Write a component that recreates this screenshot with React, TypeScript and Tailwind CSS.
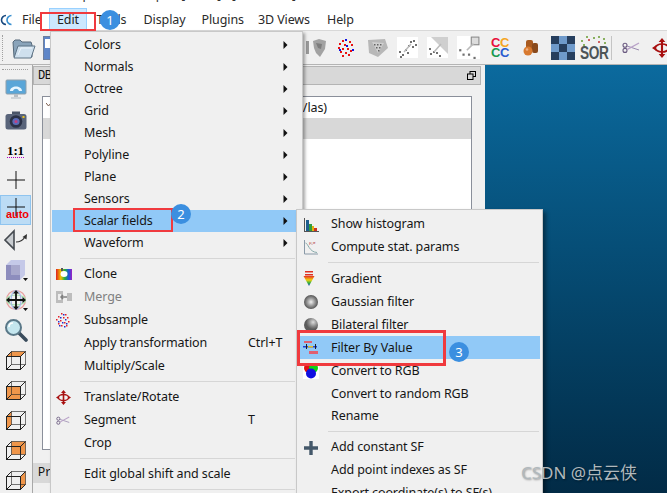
import React from "react";

const Arrow = () => (
  <svg width="5" height="8" viewBox="0 0 5 8" className="absolute right-[8px] top-1/2 -translate-y-1/2">
    <path d="M0.5 0 L4.5 4 L0.5 8 Z" fill="#111" />
  </svg>
);

const I = ({ w = 16, h = 16, children }: { w?: number; h?: number; children: React.ReactNode }) => (
  <svg width={w} height={h} viewBox={`0 0 ${w} ${h}`} className="block shrink-0">{children}</svg>
);

const Dots = ({ pts, c, s = 1.5 }: { pts: number[][]; c: string; s?: number }) => (
  <>{pts.map((p, i) => <rect key={i} x={p[0]} y={p[1]} width={s} height={s} fill={c} />)}</>
);

const CloneIcon = () => (
  <I w={17} h={14}>
    <defs>
      <linearGradient id="rb" x1="0" y1="0" x2="1" y2="0">
        <stop offset="0" stopColor="#e02020" /><stop offset=".3" stopColor="#f0c000" /><stop offset=".55" stopColor="#20b040" /><stop offset=".8" stopColor="#2050e0" /><stop offset="1" stopColor="#a020c0" />
      </linearGradient>
    </defs>
    <rect x="0" y="2" width="16" height="11" fill="url(#rb)" />
    <ellipse cx="8" cy="7" rx="3.5" ry="3" fill="#fff" />
    <rect x="5" y="1" width="2" height="3" fill="#555" />
  </I>
);
const MergeIcon = () => (
  <I w={17} h={14}>
    <rect x="0" y="1" width="7" height="12" fill="#bdbdbd" /><rect x="2" y="4" width="3" height="6" fill="#eee" />
    <rect x="11" y="3" width="5" height="8" fill="#bdbdbd" />
    <path d="M11 7 H5 M7 5 L5 7 L7 9" stroke="#808080" strokeWidth="1.5" fill="none" />
  </I>
);
const SubsampleIcon = () => (
  <I w={14} h={15}>
    <Dots c="#e5202a" pts={[[5, 0], [9, 1], [2, 3], [7, 4], [11, 4], [0, 6], [4, 7], [12, 8], [2, 10], [8, 9], [5, 12], [10, 12]]} />
    <Dots c="#2030d0" pts={[[7, 1], [4, 4], [9, 6], [2, 8], [6, 9], [10, 10], [8, 13], [3, 12]]} />
  </I>
);
const CrossRed = ({ s = 15 }: { s?: number }) => (
  <svg width={s} height={s} viewBox="0 0 15 15" className="block shrink-0">
    <g stroke="#a81010" fill="none" strokeWidth="1.3">
      <path d="M7.5 2 V13" strokeWidth="1.6" />
      <ellipse cx="7.5" cy="7.5" rx="5" ry="3" />
    </g>
    <path d="M7.5 0 L10 3 H5 Z M7.5 15 L10 12 H5 Z M0 7.5 L3 5.5 V9.5 Z M15 7.5 L12 5.5 V9.5 Z" fill="#a81010" />
  </svg>
);
const Scissors = ({ w = 14, h = 9 }: { w?: number; h?: number }) => (
  <svg width={w} height={h} viewBox="0 0 18 11" className="block shrink-0">
    <circle cx="3" cy="3.2" r="2" fill="none" stroke="#6a5a80" strokeWidth="1.1" />
    <circle cx="3" cy="8.4" r="2" fill="none" stroke="#6a5a80" strokeWidth="1.1" />
    <path d="M5 4 L17 8" stroke="#9a8ab0" strokeWidth="1" />
    <path d="M5 7.6 L17 1" stroke="#b9a2c8" strokeWidth="1.4" />
  </svg>
);
const HistIcon = () => (
  <I w={16} h={16}>
    <rect x="1" y="1" width="1" height="14" fill="#555" />
    <rect x="3" y="3" width="3" height="11" fill="#1f5f8f" />
    <rect x="6" y="7" width="3" height="7" fill="#2e9e3e" />
    <rect x="9" y="9" width="2" height="5" fill="#e0b010" />
    <rect x="11" y="11" width="3" height="3" fill="#d03020" />
    <rect x="1" y="14" width="15" height="1" fill="#555" />
  </I>
);
const StatIcon = () => (
  <I w={16} h={16}>
    <path d="M1.5 1 V15 H15" stroke="#8a9aa8" fill="none" />
    <path d="M2.5 4 C5 4 6 13 14 13.5" stroke="#8aa" fill="none" />
    <text x="6" y="5" fontSize="5" fill="#b03030" fontFamily="Liberation Serif, serif">μ,σ</text>
  </I>
);
const GradIcon = () => (
  <I w={12} h={16}>
    <rect x="2" y="0" width="8" height="1.5" fill="#e03020" />
    <rect x="2" y="3" width="8" height="1.5" fill="#e03020" />
    <defs><linearGradient id="gr" x1="0" y1="0" x2="0" y2="1"><stop offset="0" stopColor="#e83020" /><stop offset=".4" stopColor="#f0d010" /><stop offset=".7" stopColor="#30b040" /><stop offset="1" stopColor="#2040c0" /></linearGradient></defs>
    <path d="M0.5 5 H11.5 L6 15 Z" fill="url(#gr)" />
  </I>
);
const GaussIcon = () => (
  <I w={16} h={16}>
    <defs><radialGradient id="ga"><stop offset="0" stopColor="#f0f0f0" /><stop offset=".5" stopColor="#a0a0a0" /><stop offset="1" stopColor="#555" /></radialGradient></defs>
    <circle cx="8" cy="8" r="7" fill="url(#ga)" />
  </I>
);
const BilatIcon = () => (
  <I w={16} h={16}>
    <defs><radialGradient id="bi" cx=".65" cy=".3"><stop offset="0" stopColor="#dcdcdc" /><stop offset=".6" stopColor="#8a8a8a" /><stop offset="1" stopColor="#5a5a5a" /></radialGradient></defs>
    <circle cx="8" cy="8" r="7" fill="url(#bi)" />
  </I>
);
const FilterIcon = () => (
  <I w={16} h={16}>
    <rect x="1" y="1" width="8" height="2" fill="#e06070" />
    <rect x="0" y="6" width="14" height="1.5" fill="#2040d0" />
    <rect x="5" y="6" width="5" height="1.5" fill="#e8c020" />
    <rect x="3" y="4" width="1" height="5" fill="#222" />
    <rect x="12" y="4" width="1" height="5" fill="#222" />
    <rect x="6" y="11" width="9" height="3" fill="#e06070" />
  </I>
);
const RgbIcon = () => (
  <svg width="16" height="16" viewBox="0 0 16 16" className="block shrink-0">
    <rect width="16" height="16" fill="#fff" />
    <circle cx="5.5" cy="5" r="4.5" fill="#e01010" />
    <circle cx="10.5" cy="5" r="4.5" fill="#10d010" />
    <circle cx="8" cy="10.5" r="5" fill="#1010e0" />
  </svg>
);
const PlusIcon = () => (
  <I w={16} h={16}>
    <path d="M8 1 V15 M1 8 H15" stroke="#44586a" strokeWidth="3.4" />
  </I>
);

type Item = { t?: string; h?: number; sep?: boolean; icon?: React.ReactNode; arrow?: boolean; hi?: boolean; dis?: boolean; sc?: string; lo?: boolean };

const MenuRows = ({ items, left, iconLeft, sepLeft }: { items: Item[]; left: string; iconLeft: string; sepLeft: string }) => (
  <>
    {items.map((it, i) =>
      it.sep ? (
        <div key={i} style={{ height: it.h ?? 9 }} className={`flex items-center ${sepLeft} pr-[1px]`}>
          <div className="h-px w-full bg-[#d6d6d6]" />
        </div>
      ) : (
        <div
          key={i}
          style={{ height: it.h ?? 22 }}
          className={`relative flex items-center whitespace-nowrap ${left} ${it.lo ? "pt-[1px]" : ""} ${it.hi ? "bg-[#91c9f7]" : ""} ${it.dis ? "text-[#808080]" : "text-[#161616]"}`}
        >
          {it.icon && <div className={`absolute ${iconLeft} top-0 bottom-0 flex items-center`}>{it.icon}</div>}
          <span>{it.t}</span>
          {it.sc && <span className="absolute left-[196px] text-[#161616]">{it.sc}</span>}
          {it.arrow && <Arrow />}
        </div>
      )
    )}
  </>
);

const editItems: Item[] = [
  { t: "Colors", arrow: true }, { t: "Normals", arrow: true }, { t: "Octree", arrow: true }, { t: "Grid", arrow: true },
  { t: "Mesh", arrow: true }, { t: "Polyline", arrow: true }, { t: "Plane", arrow: true }, { t: "Sensors", arrow: true },
  { t: "Scalar fields", arrow: true, hi: true }, { t: "Waveform", arrow: true },
  { sep: true, h: 8 },
  { t: "Clone", h: 23, lo: true, icon: <CloneIcon /> }, { t: "Merge", h: 23, lo: true, dis: true, icon: <MergeIcon /> }, { t: "Subsample", h: 24, icon: <SubsampleIcon /> },
  { t: "Apply transformation", h: 23, sc: "Ctrl+T" }, { t: "Multiply/Scale" },
  { sep: true },
  { t: "Translate/Rotate", h: 23, icon: <CrossRed /> }, { t: "Segment", h: 23, sc: "T", icon: <Scissors /> }, { t: "Crop" },
  { sep: true },
  { t: "Edit global shift and scale" },
  { sep: true },
];

const sfItems: Item[] = [
  { t: "Show histogram", h: 23, icon: <HistIcon /> }, { t: "Compute stat. params", icon: <StatIcon /> },
  { sep: true },
  { t: "Gradient", h: 23, lo: true, icon: <GradIcon /> }, { t: "Gaussian filter", h: 23, lo: true, icon: <GaussIcon /> }, { t: "Bilateral filter", h: 23, lo: true, icon: <BilatIcon /> },
  { t: "Filter By Value", h: 23, lo: true, hi: true, icon: <FilterIcon /> }, { t: "Convert to RGB", h: 23, lo: true, icon: <RgbIcon /> },
  { t: "Convert to random RGB", h: 23, lo: true }, { t: "Rename" },
  { sep: true },
  { t: "Add constant SF", h: 23, icon: <PlusIcon /> }, { t: "Add point indexes as SF", h: 23 }, { t: "Export coordinate(s) to SF(s)", h: 23 },
];

const WireCube = ({ face }: { face: "top" | "front" | "left" | "back" | "right" }) => {
  const o = "#f0964a";
  return (
    <svg width="20" height="19" viewBox="0 0 20 19" className="block">
      {face === "top" && <path d="M0.5 5.5 L5.5 0.5 H19.5 L14.5 5.5 Z" fill={o} />}
      {face === "front" && <rect x="0.5" y="5.5" width="14" height="13" fill={o} />}
      {face === "left" && <path d="M0.5 5.5 L5.5 0.5 V13.5 L0.5 18.5 Z" fill={o} />}
      {face === "back" && <rect x="5.5" y="0.5" width="14" height="13" fill={o} />}
      {face === "right" && <path d="M14.5 5.5 L19.5 0.5 V13.5 L14.5 18.5 Z" fill={o} />}
      <g stroke="#222" fill="none" strokeWidth="1">
        <rect x="0.5" y="5.5" width="14" height="13" />
        <rect x="5.5" y="0.5" width="14" height="13" strokeOpacity=".6" />
        <path d="M0.5 5.5 L5.5 0.5 M14.5 5.5 L19.5 0.5 M0.5 18.5 L5.5 13.5 M14.5 18.5 L19.5 13.5" />
      </g>
    </svg>
  );
};

const DropTri = () => (
  <svg width="5" height="3" viewBox="0 0 5 3" className="absolute right-[3px] bottom-[4px]"><path d="M0 0 H5 L2.5 3 Z" fill="#111" /></svg>
);

const Cell = ({ children, hi }: { children: React.ReactNode; hi?: boolean }) => (
  <div className={`relative h-[30px] w-[31px] flex items-center justify-center ${hi ? "bg-[#bcdcf5] border border-[#8fc4ef]" : ""}`}>{children}</div>
);

const LeftBar = () => (
  <div className="w-[33px] shrink-0 border-r border-[#a8a8a8] bg-[#f0f0f0] relative pt-[10px]">
    <Cell>
      <svg width="22" height="22" viewBox="0 0 22 22" className="block">
        <rect x="1" y="1" width="20" height="14" rx="1" fill="#5aa6d8" stroke="#8fa0ac" />
        <path d="M5 12 C5 6 17 6 17 12 H14 C13 9 9 9 8 12 Z" fill="#e8f6ff" />
        <rect x="9" y="15" width="4" height="3" fill="#b8bec4" />
        <rect x="6" y="18" width="10" height="2" fill="#cfd4d8" />
      </svg>
    </Cell>
    <Cell>
      <svg width="22" height="19" viewBox="0 0 22 19" className="block">
        <rect x="7" y="0.5" width="8" height="4" fill="#4a5568" />
        <rect x="0.5" y="3" width="21" height="15.5" rx="2.5" fill="#59647a" />
        <circle cx="11" cy="10.5" r="6.3" fill="#2a3146" />
        <circle cx="11" cy="10.5" r="3.6" fill="#5b6bb8" />
        <circle cx="11" cy="10.5" r="1.5" fill="#c04080" />
        <rect x="17.5" y="5" width="2" height="2" fill="#e8c020" />
      </svg>
    </Cell>
    <Cell>
      <div className="relative font-['Liberation_Serif',serif] font-bold text-[13px] leading-none text-black">1:1
        <div className="absolute left-0 right-0 -bottom-[1px] border-b border-dotted border-[#b000c0]" />
      </div>
    </Cell>
    <Cell>
      <svg width="18" height="18" viewBox="0 0 18 18" className="block"><path d="M9 0 V18 M0 9 H18" stroke="#111" /></svg>
    </Cell>
    <Cell hi>
      <svg width="18" height="18" viewBox="0 0 18 18" className="absolute left-[6px] top-[2px]"><path d="M9 0 V18 M0 9 H18" stroke="#111" /></svg>
      <span className="absolute left-[5px] top-[12px] font-['Liberation_Sans',sans-serif] font-bold text-[11px] leading-[13px] text-[#f00000]">auto</span>
    </Cell>
    <Cell>
      <svg width="24" height="22" viewBox="0 0 24 22" className="block">
        <path d="M1 11 L10 2 V20 Z" fill="#c8ccd0" stroke="#454a50" strokeWidth="1.6" />
        <path d="M12 13 C16 13 19 11 21 8" stroke="#333" strokeWidth="1.2" fill="none" />
        <path d="M23 5 L22.5 10.5 L18.5 8 Z" fill="#333" />
      </svg>
    </Cell>
    <Cell>
      <svg width="22" height="22" viewBox="0 0 22 22" className="block">
        <path d="M1 6 L6 1 H20 V16 L15 21 H1 Z" fill="#c5c9e8" />
        <path d="M1 6 H15 V21 H1 Z" fill="#8d8dbd" />
        <path d="M6 6 H15 V16 H6 Z" fill="#a8a8cc" />
      </svg>
      <DropTri />
    </Cell>
    <Cell>
      <svg width="22" height="22" viewBox="0 0 22 22" className="block">
        <circle cx="11" cy="11" r="9.5" fill="none" stroke="#e8a0a0" strokeWidth="1.2" />
        <ellipse cx="11" cy="11" rx="9.5" ry="5" fill="none" stroke="#a0e0a8" strokeWidth="1.2" />
        <ellipse cx="11" cy="11" rx="5" ry="9.5" fill="none" stroke="#a8b8e8" strokeWidth="1.2" />
        <path d="M11 3 V19 M3 11 H19" stroke="#111" strokeWidth="1.8" />
        <path d="M11 1 L14 4.5 H8 Z M11 21 L14 17.5 H8 Z M1 11 L4.5 8 V14 Z M21 11 L17.5 8 V14 Z" fill="#111" />
      </svg>
      <DropTri />
    </Cell>
    <Cell>
      <svg width="24" height="24" viewBox="0 0 24 24" className="block">
        <path d="M15 15 L22 22" stroke="#3a4c5c" strokeWidth="3.6" strokeLinecap="round" />
        <circle cx="9.5" cy="9.5" r="7.5" fill="#c4e6ee" stroke="#5a7888" strokeWidth="2" />
        <path d="M5 9 C5 6 7 5 9 5" stroke="#fff" strokeWidth="1.5" fill="none" />
      </svg>
    </Cell>
    <Cell><WireCube face="top" /></Cell>
    <Cell><WireCube face="front" /></Cell>
    <Cell><WireCube face="left" /></Cell>
    <Cell><WireCube face="back" /></Cell>
    <Cell><WireCube face="right" /></Cell>
    <div className="absolute left-[2px] top-[4px] w-[26px] border-t border-dotted border-[#a0a0a0]" />
  </div>
);

const SpeckleSquare = ({ variant }: { variant: number }) => {
  const base = variant === 0
    ? [[2, 14], [5, 17], [3, 19], [8, 12], [10, 15], [13, 4], [16, 3], [18, 7], [15, 9], [11, 8]]
    : variant === 1
    ? [[2, 11], [6, 14], [3, 16], [9, 15], [12, 18]]
    : [[2, 12], [5, 16], [10, 16], [15, 19]];
  return (
    <svg width="21" height="21" viewBox="0 0 21 21" className="block">
      <rect width="21" height="21" fill="#fff" />
      {variant === 1 && <path d="M4 0 H21 V17 Z" fill="#cfcfcf" />}
      {variant === 2 && <rect x="13" y="1" width="7" height="7" fill="#ddd" stroke="#888" />}
      <Dots c="#707070" s={2} pts={base} />
      <path d={variant === 2 ? "M9 13 L15 7" : "M7 15 L14 7"} stroke="#bbb" strokeWidth="1.5" />
    </svg>
  );
};

const Checker = () => {
  const cells = [0, 1, 0, 1, 0, 1, 0, 1, 0];
  return (
    <div className="grid grid-cols-3 w-[24px] h-[24px]">
      {cells.map((c, i) => <div key={i} className={c ? "bg-[#6f9acb]" : "bg-[#263e5e]"} />)}
    </div>
  );
};

const Dots2 = () => (
  <svg width="26" height="10" viewBox="0 0 26 10" className="absolute left-0 top-0">
    <Dots c="#8ab060" s={2} pts={[[1, 4], [6, 0], [13, 1], [18, 0], [23, 2], [24, 6], [3, 8]]} />
    <Dots c="#d06060" s={2} pts={[[8, 3], [18, 5]]} />
  </svg>
);

const TopBar = () => (
  <div className="h-[35px] shrink-0 bg-[#f0f0f0] border-t border-[#d8d8d8] border-b border-b-[#b4b4b4] flex items-center relative">
    <div className="ml-[2px] h-[26px] border-l border-dotted border-[#a0a0a0]" />
    <div className="ml-[9px]">
      <svg width="24" height="22" viewBox="0 0 24 22" className="block">
        <path d="M2 20 L1 5 L3 3 H8 L10 5 H19 L20 8 V20 Z" fill="#8aa4ba" stroke="#56697a" />
        <path d="M2 21 L6 9 H23 L19 21 Z" fill="#cfe0ee" stroke="#5f7486" />
        <path d="M6 18 L9 11 H20" stroke="#eef5fb" fill="none" />
      </svg>
    </div>
    <div className="ml-[7px] w-[12px] h-[24px] bg-[#5f86c8] border border-[#6f7f9c] flex flex-col items-center pt-[2px]">
      <div className="w-[8px] h-[9px] bg-white" />
    </div>
    <div className="ml-auto flex items-center">
      <div className="w-[3px] h-[13px] bg-[#9a9a9a]" />
      <svg width="15" height="18" viewBox="0 0 15 18" className="block ml-[3px]">
        <path d="M1 2 L7 0 L14 2 L13 10 L8 18 L4 14 L2 9 Z" fill="#a2a2a2" />
        <path d="M4 4 L10 5 L9 10 L6 9 Z" fill="#7d7d7d" />
      </svg>
      <svg width="17" height="18" viewBox="0 0 17 18" className="block ml-[11px]">
        <Dots c="#e81010" s={2} pts={[[4, 1], [11, 2], [1, 4], [6, 5], [13, 5], [0, 8], [4, 9], [9, 9], [2, 12], [7, 13], [12, 11], [4, 16], [10, 15]]} />
        <Dots c="#1010e0" s={2} pts={[[7, 0], [14, 10], [8, 6], [1, 10]]} />
      </svg>
      <svg width="21" height="18" viewBox="0 0 21 18" className="block ml-[13px]">
        <path d="M0 1 L17 0 L20 9 L10 18 L1 14 Z" fill="#b8b8b8" />
        <path d="M4 3 L16 4 L10 14 Z" fill="#d0d0d0" />
        <Dots c="#666" pts={[[6, 5], [9, 5], [12, 5], [8, 8], [11, 8], [10, 11]]} />
      </svg>
      <div className="ml-[8px]"><SpeckleSquare variant={0} /></div>
      <div className="ml-[9px]"><SpeckleSquare variant={1} /></div>
      <div className="ml-[10px] scale-110"><SpeckleSquare variant={2} /></div>
      <div className="ml-[12px] w-[18px] grid grid-cols-2 font-['Liberation_Sans',sans-serif] font-bold text-[13px] leading-[10px] text-center">
        <span className="text-[#e8103a]">C</span><span className="text-[#f5a623]">C</span>
        <span className="text-[#1a9a50]">C</span><span className="text-[#2a5cd0]">C</span>
      </div>
      <svg width="16" height="17" viewBox="0 0 16 17" className="block ml-[14px]">
        <rect x="3" y="1" width="7" height="11" rx="2" fill="#a85a20" />
        <rect x="9" y="4" width="6" height="10" rx="2" fill="#8a4a1c" />
        <circle cx="5" cy="12" r="4.5" fill="#d87a30" />
        <circle cx="4" cy="10.5" r="1.3" fill="#f0b080" />
      </svg>
      <div className="ml-[12px]"><Checker /></div>
      <div className="ml-[5px] w-[26px] h-[24px] relative">
        <Dots2 />
        <span className="absolute left-0 -bottom-[1px] font-['Liberation_Sans',sans-serif] font-bold text-[19px] leading-[17px] tracking-[-0.5px] text-[#4d5457] scale-x-[0.72] origin-left">SOR</span>
      </div>
      <div className="ml-[5px] w-px h-[24px] bg-[#c4c4c4]" />
      <div className="ml-[10px]"><Scissors w={18} h={11} /></div>
      <div className="ml-[12px] mr-[-5px]"><CrossRed s={20} /></div>
    </div>
  </div>
);

const Dock = () => (
  <div className="w-[452px] shrink-0 bg-[#f0f0f0] font-['Liberation_Mono',monospace]">
    <div className="mt-[1px] w-[448px] h-[19px] bg-[#d8d8d8] border border-[#b4b4b4] flex items-center justify-between pl-[4px] pr-[4px] text-[12px] tracking-[-0.5px] text-[#111]">
      <span>DB Tree</span>
      <svg width="9" height="9" viewBox="0 0 9 9" className="block">
        <rect x="3" y="0.5" width="5.5" height="5" fill="none" stroke="#000" />
        <rect x="0.5" y="3" width="5.5" height="5.5" fill="#d8d8d8" stroke="#000" />
      </svg>
    </div>
    <div className="mt-[11px] ml-[9px] w-[430px] h-[354px] bg-white border border-[#8a8f9a] relative">
      <svg width="5" height="3" viewBox="0 0 5 3" className="absolute left-[3px] top-[6px]"><path d="M0 0 L2.5 3 L5 0" stroke="#7a5a4a" fill="none" /></svg>
      <div className="h-[21px] pt-[1px] flex justify-end items-center pr-[144px] font-['Noto_Sans',sans-serif] text-[12.5px] tracking-[-0.1px] text-[#161616]">/las)</div>
      <div className="h-[21px] bg-[#d8d8d8]" />
    </div>
    <div className="mt-[13px] w-[448px] h-[20px] flex items-center pl-[5px] text-[12px] tracking-[-0.5px] text-[#111] bg-[#d8d8d8]">Properties</div>
  </div>
);

const menuItems = [
  { t: "File", w: "ml-[8px]" }, { t: "Edit", w: "ml-[17px]" }, { t: "Tools", w: "ml-[16px]" }, { t: "Display", w: "ml-[17px]" },
  { t: "Plugins", w: "ml-[16px]" }, { t: "3D Views", w: "ml-[14px]" }, { t: "Help", w: "ml-[17px]" },
];

const Badge = ({ n, c }: { n: number; c: string }) => (
  <div className={`absolute ${c} w-[20px] h-[20px] rounded-full bg-[#3b8fe0] text-white flex items-center justify-center text-[13px] leading-none`}>{n}</div>
);

export default function App() {
  return (
    <div className="relative w-[667px] h-[493px] overflow-hidden bg-white flex flex-col font-['Noto_Sans',sans-serif] text-[12.5px] tracking-[-0.1px]">
      <div className="h-[9px] shrink-0 overflow-hidden relative">
        <div className="-mt-[14px] ml-[22px] whitespace-nowrap text-[12.5px] leading-[18px] text-[#333]">CloudCompare v2.12 alpha [64 bit] - [3D View 1]</div>
      </div>
      <div className="h-[21px] shrink-0 flex items-center bg-white text-[#2a2a2a]">
        <svg width="14" height="12" viewBox="0 0 14 12" className="block shrink-0">
          <path d="M6 1.5 A4.5 4.5 0 1 0 6 10.5" stroke="#1a4a80" strokeWidth="1.6" fill="none" />
          <path d="M11.5 1.5 A4.5 4.5 0 1 0 11.5 10.5" stroke="#3a90d0" strokeWidth="1.6" fill="none" />
        </svg>
        {menuItems.map((m) => (
          <span key={m.t} className={`${m.w} leading-[18px]`}>{m.t}</span>
        ))}
      </div>
      <TopBar />
      <div className="flex-1 flex min-h-0">
        <LeftBar />
        <Dock />
        <div className="flex-1 bg-gradient-to-b from-[#0b6a9e] to-[#022b46]" />
      </div>

      {/* Edit highlight in the menu bar */}
      <div className="absolute left-[49px] top-[8px] w-[38px] h-[23px] pt-[1px] bg-[#cce8ff] border border-[#99d1ff] flex items-center justify-center text-[#222]">Edit</div>

      {/* Edit menu */}
      <div className="absolute left-[50px] top-[31px] w-[253px] h-[470px] bg-[#f0f0f0] border border-[#c8c8c8] pt-[2px] pl-[1px] pr-[6px] shadow-[2px_2px_3px_rgba(0,0,0,0.35)]">
        <MenuRows items={editItems} left="pl-[32px]" iconLeft="left-[4px]" sepLeft="pl-[28px]" />
      </div>

      {/* Scalar fields submenu */}
      <div className="absolute left-[296px] top-[209px] w-[247px] h-[300px] bg-[#f0f0f0] border border-[#c8c8c8] pt-[3px] pl-[1px] pr-[2px] shadow-[3px_3px_4px_rgba(0,0,0,0.4)]">
        <MenuRows items={sfItems} left="pl-[33px]" iconLeft="left-[5px]" sepLeft="pl-[30px]" />
      </div>

      {/* Annotations */}
      <div className="absolute left-[40px] top-[12px] w-[56px] h-[19px] border-[2px] border-[#f03a3e]" />
      <div className="absolute left-[73px] top-[208px] w-[100px] h-[24px] border-[2px] border-[#f03a3e]" />
      <div className="absolute left-[297px] top-[330px] w-[149px] h-[36px] border-[3px] border-[#f03a3e]" />
      <Badge n={1} c="left-[100px] top-[10px]" />
      <Badge n={2} c="left-[171px] top-[204px]" />
      <Badge n={3} c="left-[449px] top-[342px]" />

      <div className="absolute left-[521px] top-[461px] whitespace-nowrap text-[17px] tracking-normal leading-[24px] text-[#b0b8bc] [text-shadow:1px_1px_2px_rgba(0,0,0,0.4)] font-['Noto_Sans','Noto_Sans_CJK_SC',sans-serif]">CSDN @点云侠</div>
    </div>
  );
}
